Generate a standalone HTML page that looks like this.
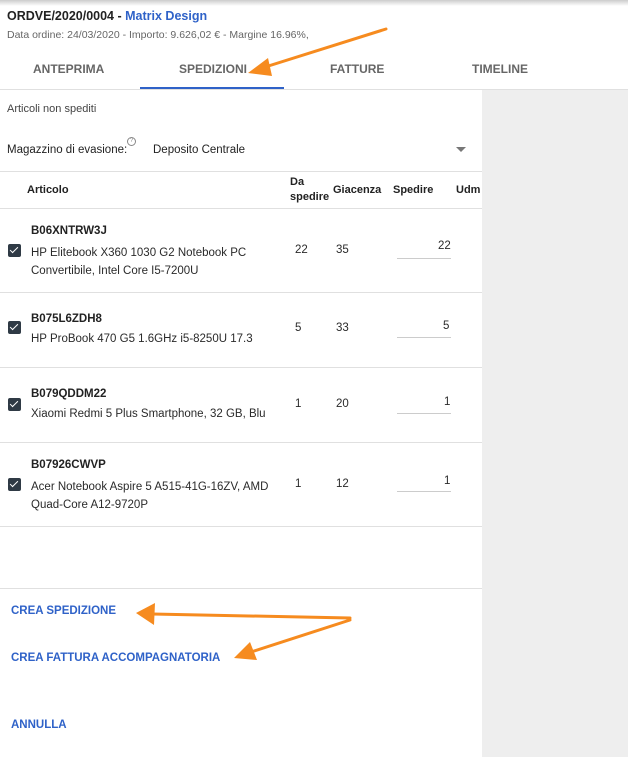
<!DOCTYPE html><html><head><style>
body{margin:0;width:628px;height:757px;background:#fff;font-family:"Liberation Sans",Arial,sans-serif;position:relative;overflow:hidden;color:#222}
.a{position:absolute;white-space:nowrap}
.hr{position:absolute;left:0;width:482px;height:1px;background:#e0e0e0}
.tab{position:absolute;top:62px;font-size:12px;color:#666;font-weight:bold}
.cb{position:absolute;left:8px;width:13px;height:13px;background:#2f3a45;border-radius:2px}
.cb:after{content:"";position:absolute;left:4px;top:1px;width:3px;height:7px;border:solid #fff;border-width:0 1.5px 1.5px 0;transform:rotate(45deg)}
.code{font-size:11.5px;font-weight:bold}
.t{font-size:11.5px;color:#2a2a2a}
.ul{position:absolute;left:397px;width:54px;height:1px;background:#ccc}
.btn{position:absolute;left:11px;font-size:11.5px;font-weight:bold;color:#2f62c8}
</style></head><body>
<div class="a" style="left:0;top:0;width:628px;height:6px;background:linear-gradient(#ccc,#fff)"></div>
<div class="a" style="left:7px;top:9px;font-size:12.5px;font-weight:bold">ORDVE/2020/0004 - <span style="color:#2f62c8">Matrix Design</span></div>
<div class="a" style="left:7px;top:29px;font-size:10.5px;color:#666">Data ordine: 24/03/2020 - Importo: 9.626,02 € - Margine 16.96%,</div>
<div class="tab" style="left:33px">ANTEPRIMA</div>
<div class="tab" style="left:179px">SPEDIZIONI</div>
<div class="tab" style="left:330px">FATTURE</div>
<div class="tab" style="left:472px">TIMELINE</div>
<div class="a" style="left:140px;top:87px;width:144px;height:2px;background:#2f62c8"></div>
<div class="a" style="left:0;top:89px;width:628px;height:1px;background:#e0e0e0"></div>
<div class="a" style="left:482px;top:90px;width:146px;height:667px;background:#eeeeee"></div>
<div class="a" style="left:7px;top:103px;font-size:11px;color:#444">Articoli non spediti</div>
<div class="a" style="left:7px;top:144px;font-size:11.5px">Magazzino di evasione:</div>
<div class="a" style="left:127px;top:137px;width:7px;height:7px;border:1px solid #888;border-radius:50%;font-size:6px;line-height:7px;text-align:center;color:#888">?</div>
<div class="a" style="left:153px;top:144px;font-size:11.5px">Deposito Centrale</div>
<div class="a" style="left:456px;top:147px;border:5px solid transparent;border-top:5px solid #777"></div>
<div class="hr" style="top:171px"></div>
<div class="a" style="left:27px;top:184px;font-size:11px;font-weight:bold">Articolo</div>
<div class="a" style="left:290px;top:175px;font-size:11px;font-weight:bold;line-height:15px">Da<br>spedire</div>
<div class="a" style="left:333px;top:184px;font-size:11px;font-weight:bold">Giacenza</div>
<div class="a" style="left:393px;top:184px;font-size:11px;font-weight:bold">Spedire</div>
<div class="a" style="left:456px;top:184px;font-size:11px;font-weight:bold">Udm</div>
<div class="hr" style="top:208px"></div>

<div class="a code" style="left:31px;top:225px">B06XNTRW3J</div>
<div class="a t" style="left:31px;top:244px;line-height:18px">HP Elitebook X360 1030 G2 Notebook PC<br>Convertibile, Intel Core I5-7200U</div>
<div class="cb" style="top:244px"></div>
<div class="a t" style="left:295px;top:244px">22</div><div class="a t" style="left:336px;top:244px">35</div><div class="a t" style="left:438px;top:240px">22</div><div class="ul" style="top:258px"></div>
<div class="hr" style="top:292px"></div>

<div class="a code" style="left:31px;top:313px">B075L6ZDH8</div>
<div class="a t" style="left:31px;top:333px">HP ProBook 470 G5 1.6GHz i5-8250U 17.3</div>
<div class="cb" style="top:321px"></div>
<div class="a t" style="left:295px;top:322px">5</div><div class="a t" style="left:336px;top:322px">33</div><div class="a t" style="left:443px;top:320px">5</div><div class="ul" style="top:337px"></div>
<div class="hr" style="top:367px"></div>

<div class="a code" style="left:31px;top:388px">B079QDDM22</div>
<div class="a t" style="left:31px;top:408px">Xiaomi Redmi 5 Plus Smartphone, 32 GB, Blu</div>
<div class="cb" style="top:398px"></div>
<div class="a t" style="left:295px;top:398px">1</div><div class="a t" style="left:336px;top:398px">20</div><div class="a t" style="left:444px;top:396px">1</div><div class="ul" style="top:413px"></div>
<div class="hr" style="top:442px"></div>

<div class="a code" style="left:31px;top:459px">B07926CWVP</div>
<div class="a t" style="left:31px;top:478px;line-height:18px">Acer Notebook Aspire 5 A515-41G-16ZV, AMD<br>Quad-Core A12-9720P</div>
<div class="cb" style="top:478px"></div>
<div class="a t" style="left:295px;top:478px">1</div><div class="a t" style="left:336px;top:478px">12</div><div class="a t" style="left:444px;top:475px">1</div><div class="ul" style="top:491px"></div>
<div class="hr" style="top:526px"></div>
<div class="hr" style="top:588px"></div>

<div class="btn" style="top:605px">CREA SPEDIZIONE</div>
<div class="btn" style="top:652px">CREA FATTURA ACCOMPAGNATORIA</div>
<div class="btn" style="top:719px">ANNULLA</div>

<svg class="a" style="left:0;top:0" width="628" height="757">
<g stroke="#f68b1f" stroke-width="3" fill="#f68b1f" stroke-linecap="round">
<line x1="386" y1="29" x2="262" y2="68"/>
<polygon points="248,73 268,58 272,76" stroke="none"/>
<line x1="350" y1="618" x2="152" y2="614"/>
<polygon points="136,613 155,603 154,625" stroke="none"/>
<line x1="350" y1="620" x2="248" y2="653"/>
<polygon points="234,658 250,642 257,660" stroke="none"/>
</g></svg>
</body></html>
